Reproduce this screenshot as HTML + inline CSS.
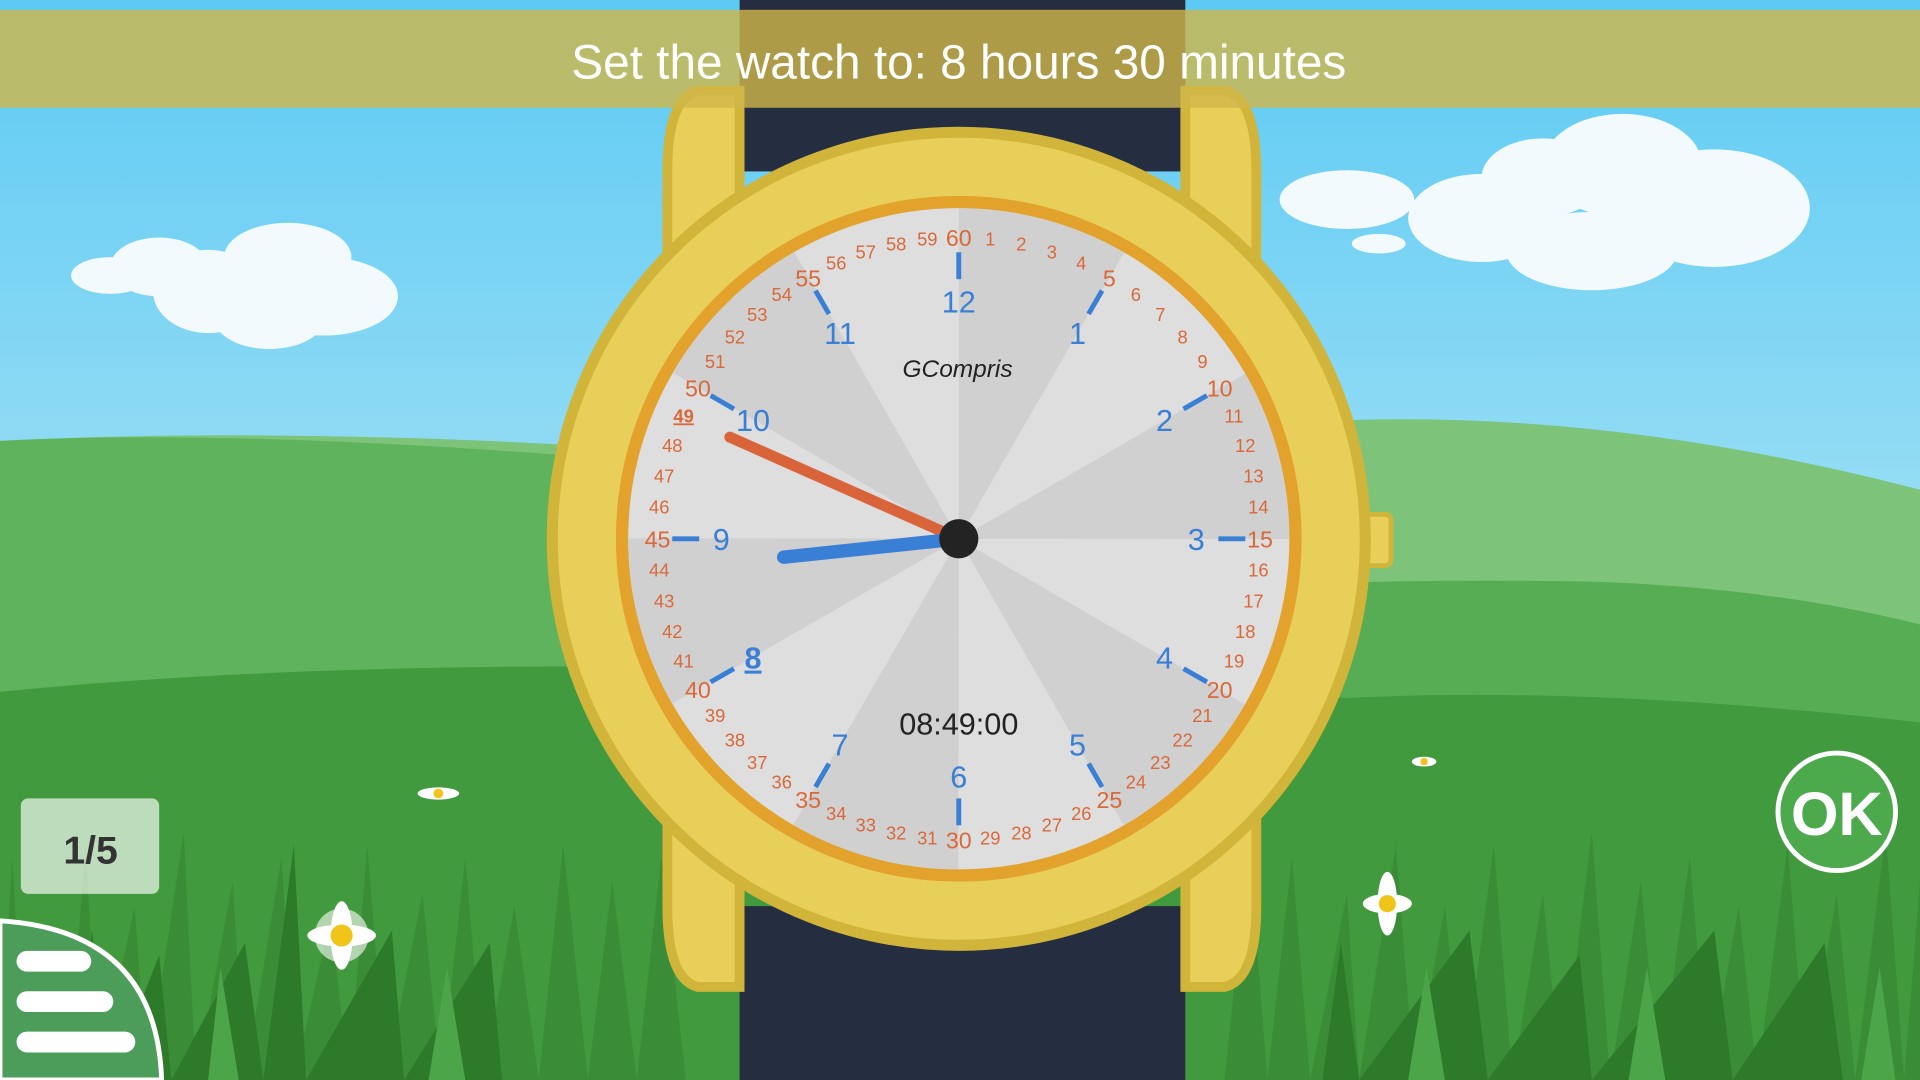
<!DOCTYPE html>
<html><head><meta charset="utf-8"><style>
html,body{margin:0;padding:0;width:1920px;height:1080px;overflow:hidden}
svg{display:block}
text{font-family:"Liberation Sans",sans-serif}
</style></head><body>
<svg width="1920" height="1080" viewBox="0 0 1568 882" preserveAspectRatio="none">
<defs>
<linearGradient id="sky" x1="0" y1="0" x2="0" y2="1"><stop offset="0" stop-color="#5ccaf3"/><stop offset="0.6" stop-color="#a6e2f5"/></linearGradient>
</defs>
<rect width="1568" height="882" fill="url(#sky)"/>
<!-- clouds -->
<g fill="#f3fafd">
<ellipse cx="90" cy="225" rx="32" ry="15"/><ellipse cx="130" cy="218" rx="40" ry="24"/><ellipse cx="170" cy="238" rx="45" ry="34"/><ellipse cx="235" cy="210" rx="52" ry="28"/><ellipse cx="265" cy="242" rx="60" ry="32"/><ellipse cx="220" cy="260" rx="45" ry="25"/>
<ellipse cx="1100" cy="163" rx="55" ry="24"/><ellipse cx="1210" cy="178" rx="60" ry="36"/><ellipse cx="1260" cy="145" rx="50" ry="32"/><ellipse cx="1325" cy="135" rx="65" ry="42"/><ellipse cx="1400" cy="170" rx="78" ry="48"/><ellipse cx="1300" cy="205" rx="70" ry="32"/><ellipse cx="1126" cy="199" rx="22" ry="8"/>
</g>
<!-- hills -->
<path d="M0 360 Q300 345 700 380 Q900 360 1060 345 Q1300 330 1568 400 L1568 882 L0 882Z" fill="#7dc47a"/>
<path d="M0 360 Q200 350 500 375 Q700 420 800 480 L800 882 L0 882Z" fill="#5fb35d"/>
<path d="M700 500 Q1000 470 1300 475 Q1450 480 1568 510 L1568 882 L700 882Z" fill="#56ad54"/>
<path d="M0 565 Q250 540 600 545 Q900 560 1100 570 Q1300 560 1568 590 L1568 882 L0 882Z" fill="#419a3d"/>
<!-- grass -->
<g fill="#3a8c36">
<path d="M0 882 L10 700 L20 882 L40 760 L55 882 L70 690 L80 882 L110 740 L120 882 L150 680 L160 882 L190 720 L200 882 L230 700 L240 882 L270 750 L285 882 L300 690 L315 882 L345 730 L360 882 L380 700 L395 882 L420 740 L440 882 L460 690 L480 882 L500 720 L520 882 L540 700 L560 882Z"/>
<path d="M1000 882 L1020 690 L1035 882 L1055 700 L1070 882 L1100 730 L1110 882 L1140 690 L1155 882 L1180 740 L1195 882 L1220 690 L1235 882 L1260 730 L1275 882 L1300 680 L1315 882 L1340 720 L1355 882 L1380 700 L1395 882 L1420 740 L1435 882 L1460 690 L1475 882 L1500 730 L1515 882 L1540 680 L1555 882 L1568 720 L1568 882Z"/>
</g>
<g fill="#2e7a2b">
<path d="M60 882 L75 760 L90 882 L130 780 L140 882 L200 770 L215 882 L240 690 L250 882 L320 760 L330 882 L400 770 L410 882Z"/>
<path d="M1080 882 L1095 770 L1110 882 L1200 760 L1215 882 L1290 780 L1300 882 L1400 760 L1415 882 L1490 770 L1505 882Z"/>
</g>
<g fill="#4ca548">
<path d="M20 882 L35 780 L45 882 L170 882 L180 790 L195 882 L350 882 L365 790 L380 882Z"/>
<path d="M1150 882 L1165 790 L1180 882 L1330 882 L1345 790 L1360 882 L1520 882 L1535 790 L1548 882Z"/>
</g>
<!-- daisies -->
<g fill="#fff"><ellipse cx="279" cy="764" rx="28" ry="9"/><ellipse cx="279" cy="764" rx="9" ry="28"/><ellipse cx="279" cy="764" rx="22" ry="22" opacity=".6"/><ellipse cx="1133" cy="738" rx="8" ry="26"/><ellipse cx="1133" cy="738" rx="20" ry="8"/><ellipse cx="358" cy="648" rx="17" ry="5"/><ellipse cx="1163" cy="622" rx="10" ry="4"/></g>
<g fill="#f0c419"><circle cx="279" cy="764" r="9"/><circle cx="1133" cy="738" r="7"/><circle cx="358" cy="648" r="4"/><circle cx="1163" cy="622" r="3"/></g>
<!-- strap -->
<rect x="604" y="0" width="364" height="140" fill="#252d40"/>
<rect x="604" y="740" width="364" height="142" fill="#252d40"/>
<!-- lugs -->
<g fill="#e8cf5a" stroke="#d0b53a" stroke-width="8">
<path d="M604 74 L570 74 Q545 80 545 140 L545 230 L604 230Z"/>
<path d="M968 74 L1000 74 Q1026 80 1026 140 L1026 230 L968 230Z"/>
<path d="M604 806 L570 806 Q545 800 545 740 L545 650 L604 650Z"/>
<path d="M968 806 L1000 806 Q1026 800 1026 740 L1026 650 L968 650Z"/>
</g>
<rect x="1108" y="420" width="28" height="42" rx="5" fill="#e8cf5a" stroke="#d0b53a" stroke-width="4"/>
<!-- case -->
<circle cx="783" cy="440" r="332" fill="#e8cf5a" stroke="#d0b53a" stroke-width="9"/>
<circle cx="783" cy="440" r="275" fill="#dedede" stroke="#e2a22c" stroke-width="10"/>
<circle cx="783" cy="440" r="135" fill="none" stroke="#d0d0d0" stroke-width="270" stroke-dasharray="70.686 70.686" transform="rotate(-90 783 440)"/>
<!-- ticks -->
<g stroke="#3a7fd6" stroke-width="4" stroke-linecap="butt">
<g transform="translate(783 440)">
<line x1="0" y1="-212" x2="0" y2="-234" transform="rotate(0)"/><line x1="0" y1="-212" x2="0" y2="-234" transform="rotate(30)"/><line x1="0" y1="-212" x2="0" y2="-234" transform="rotate(60)"/><line x1="0" y1="-212" x2="0" y2="-234" transform="rotate(90)"/><line x1="0" y1="-212" x2="0" y2="-234" transform="rotate(120)"/><line x1="0" y1="-212" x2="0" y2="-234" transform="rotate(150)"/><line x1="0" y1="-212" x2="0" y2="-234" transform="rotate(180)"/><line x1="0" y1="-212" x2="0" y2="-234" transform="rotate(210)"/><line x1="0" y1="-212" x2="0" y2="-234" transform="rotate(240)"/><line x1="0" y1="-212" x2="0" y2="-234" transform="rotate(270)"/><line x1="0" y1="-212" x2="0" y2="-234" transform="rotate(300)"/><line x1="0" y1="-212" x2="0" y2="-234" transform="rotate(330)"/>
</g></g>
<!-- hour numbers -->
<g fill="#3a7fd6" font-size="25" text-anchor="middle">
<g transform="translate(783 440)">
<text transform="rotate(0) translate(0 -194) rotate(0)" y="9">12</text>
<text transform="rotate(30) translate(0 -194) rotate(-30)" y="9">1</text>
<text transform="rotate(60) translate(0 -194) rotate(-60)" y="9">2</text>
<text transform="rotate(90) translate(0 -194) rotate(-90)" y="9">3</text>
<text transform="rotate(120) translate(0 -194) rotate(-120)" y="9">4</text>
<text transform="rotate(150) translate(0 -194) rotate(-150)" y="9">5</text>
<text transform="rotate(180) translate(0 -194) rotate(-180)" y="9">6</text>
<text transform="rotate(210) translate(0 -194) rotate(-210)" y="9">7</text>
<text transform="rotate(240) translate(0 -194) rotate(-240)" y="9" font-weight="bold" text-decoration="underline">8</text>
<text transform="rotate(270) translate(0 -194) rotate(-270)" y="9">9</text>
<text transform="rotate(300) translate(0 -194) rotate(-300)" y="9">10</text>
<text transform="rotate(330) translate(0 -194) rotate(-330)" y="9">11</text>
</g></g>
<!-- minute numbers -->
<g fill="#d9683a" font-size="15" text-anchor="middle">
<g transform="translate(783 440)">
<text transform="rotate(0) translate(0 -246) rotate(0)" y="7" font-size="19">60</text>
<text transform="rotate(6) translate(0 -246) rotate(-6)" y="5">1</text>
<text transform="rotate(12) translate(0 -246) rotate(-12)" y="5">2</text>
<text transform="rotate(18) translate(0 -246) rotate(-18)" y="5">3</text>
<text transform="rotate(24) translate(0 -246) rotate(-24)" y="5">4</text>
<text transform="rotate(30) translate(0 -246) rotate(-30)" y="7" font-size="19">5</text>
<text transform="rotate(36) translate(0 -246) rotate(-36)" y="5">6</text>
<text transform="rotate(42) translate(0 -246) rotate(-42)" y="5">7</text>
<text transform="rotate(48) translate(0 -246) rotate(-48)" y="5">8</text>
<text transform="rotate(54) translate(0 -246) rotate(-54)" y="5">9</text>
<text transform="rotate(60) translate(0 -246) rotate(-60)" y="7" font-size="19">10</text>
<text transform="rotate(66) translate(0 -246) rotate(-66)" y="5">11</text>
<text transform="rotate(72) translate(0 -246) rotate(-72)" y="5">12</text>
<text transform="rotate(78) translate(0 -246) rotate(-78)" y="5">13</text>
<text transform="rotate(84) translate(0 -246) rotate(-84)" y="5">14</text>
<text transform="rotate(90) translate(0 -246) rotate(-90)" y="7" font-size="19">15</text>
<text transform="rotate(96) translate(0 -246) rotate(-96)" y="5">16</text>
<text transform="rotate(102) translate(0 -246) rotate(-102)" y="5">17</text>
<text transform="rotate(108) translate(0 -246) rotate(-108)" y="5">18</text>
<text transform="rotate(114) translate(0 -246) rotate(-114)" y="5">19</text>
<text transform="rotate(120) translate(0 -246) rotate(-120)" y="7" font-size="19">20</text>
<text transform="rotate(126) translate(0 -246) rotate(-126)" y="5">21</text>
<text transform="rotate(132) translate(0 -246) rotate(-132)" y="5">22</text>
<text transform="rotate(138) translate(0 -246) rotate(-138)" y="5">23</text>
<text transform="rotate(144) translate(0 -246) rotate(-144)" y="5">24</text>
<text transform="rotate(150) translate(0 -246) rotate(-150)" y="7" font-size="19">25</text>
<text transform="rotate(156) translate(0 -246) rotate(-156)" y="5">26</text>
<text transform="rotate(162) translate(0 -246) rotate(-162)" y="5">27</text>
<text transform="rotate(168) translate(0 -246) rotate(-168)" y="5">28</text>
<text transform="rotate(174) translate(0 -246) rotate(-174)" y="5">29</text>
<text transform="rotate(180) translate(0 -246) rotate(-180)" y="7" font-size="19">30</text>
<text transform="rotate(186) translate(0 -246) rotate(-186)" y="5">31</text>
<text transform="rotate(192) translate(0 -246) rotate(-192)" y="5">32</text>
<text transform="rotate(198) translate(0 -246) rotate(-198)" y="5">33</text>
<text transform="rotate(204) translate(0 -246) rotate(-204)" y="5">34</text>
<text transform="rotate(210) translate(0 -246) rotate(-210)" y="7" font-size="19">35</text>
<text transform="rotate(216) translate(0 -246) rotate(-216)" y="5">36</text>
<text transform="rotate(222) translate(0 -246) rotate(-222)" y="5">37</text>
<text transform="rotate(228) translate(0 -246) rotate(-228)" y="5">38</text>
<text transform="rotate(234) translate(0 -246) rotate(-234)" y="5">39</text>
<text transform="rotate(240) translate(0 -246) rotate(-240)" y="7" font-size="19">40</text>
<text transform="rotate(246) translate(0 -246) rotate(-246)" y="5">41</text>
<text transform="rotate(252) translate(0 -246) rotate(-252)" y="5">42</text>
<text transform="rotate(258) translate(0 -246) rotate(-258)" y="5">43</text>
<text transform="rotate(264) translate(0 -246) rotate(-264)" y="5">44</text>
<text transform="rotate(270) translate(0 -246) rotate(-270)" y="7" font-size="19">45</text>
<text transform="rotate(276) translate(0 -246) rotate(-276)" y="5">46</text>
<text transform="rotate(282) translate(0 -246) rotate(-282)" y="5">47</text>
<text transform="rotate(288) translate(0 -246) rotate(-288)" y="5">48</text>
<text transform="rotate(294) translate(0 -246) rotate(-294)" y="5" font-weight="bold" text-decoration="underline">49</text>
<text transform="rotate(300) translate(0 -246) rotate(-300)" y="7" font-size="19">50</text>
<text transform="rotate(306) translate(0 -246) rotate(-306)" y="5">51</text>
<text transform="rotate(312) translate(0 -246) rotate(-312)" y="5">52</text>
<text transform="rotate(318) translate(0 -246) rotate(-318)" y="5">53</text>
<text transform="rotate(324) translate(0 -246) rotate(-324)" y="5">54</text>
<text transform="rotate(330) translate(0 -246) rotate(-330)" y="7" font-size="19">55</text>
<text transform="rotate(336) translate(0 -246) rotate(-336)" y="5">56</text>
<text transform="rotate(342) translate(0 -246) rotate(-342)" y="5">57</text>
<text transform="rotate(348) translate(0 -246) rotate(-348)" y="5">58</text>
<text transform="rotate(354) translate(0 -246) rotate(-354)" y="5">59</text>
</g></g>
<text x="782" y="308" text-anchor="middle" font-family="Liberation Serif,serif" font-style="italic" font-size="20" fill="#222">GCompris</text>
<text x="783" y="600" text-anchor="middle" font-size="25" fill="#222">08:49:00</text>
<!-- hands -->
<line x1="783" y1="440" x2="596" y2="357" stroke="#d9643a" stroke-width="9" stroke-linecap="round"/>
<line x1="783" y1="440" x2="640" y2="455" stroke="#3a7fd6" stroke-width="11" stroke-linecap="round"/>
<circle cx="783" cy="440" r="16" fill="#232323"/>
<!-- banner -->
<rect x="0" y="8" width="1568" height="80" fill="#d0b748" opacity="0.8"/>
<text x="783" y="64" text-anchor="middle" font-size="39" fill="#fff">Set the watch to: 8 hours 30 minutes</text>
<!-- score -->
<rect x="17" y="652" width="113" height="78" rx="6" fill="#fff" opacity="0.65"/>
<text x="74" y="705" text-anchor="middle" font-size="32" font-weight="bold" fill="#333">1/5</text>
<!-- menu -->
<path d="M0 752 Q128 760 132 882 L0 882Z" fill="#4c9c5a" stroke="#fff" stroke-width="4"/>
<g stroke="#fff" stroke-width="17" stroke-linecap="round"><line x1="22" y1="785" x2="66" y2="785"/><line x1="22" y1="818" x2="84" y2="818"/><line x1="22" y1="851" x2="102" y2="851"/></g>
<!-- OK -->
<circle cx="1500" cy="663" r="48" fill="#4caa4c" stroke="#fff" stroke-width="4"/>
<text x="1500" y="682" text-anchor="middle" font-size="50" font-weight="bold" fill="#fff">OK</text>
</svg>
</body></html>
